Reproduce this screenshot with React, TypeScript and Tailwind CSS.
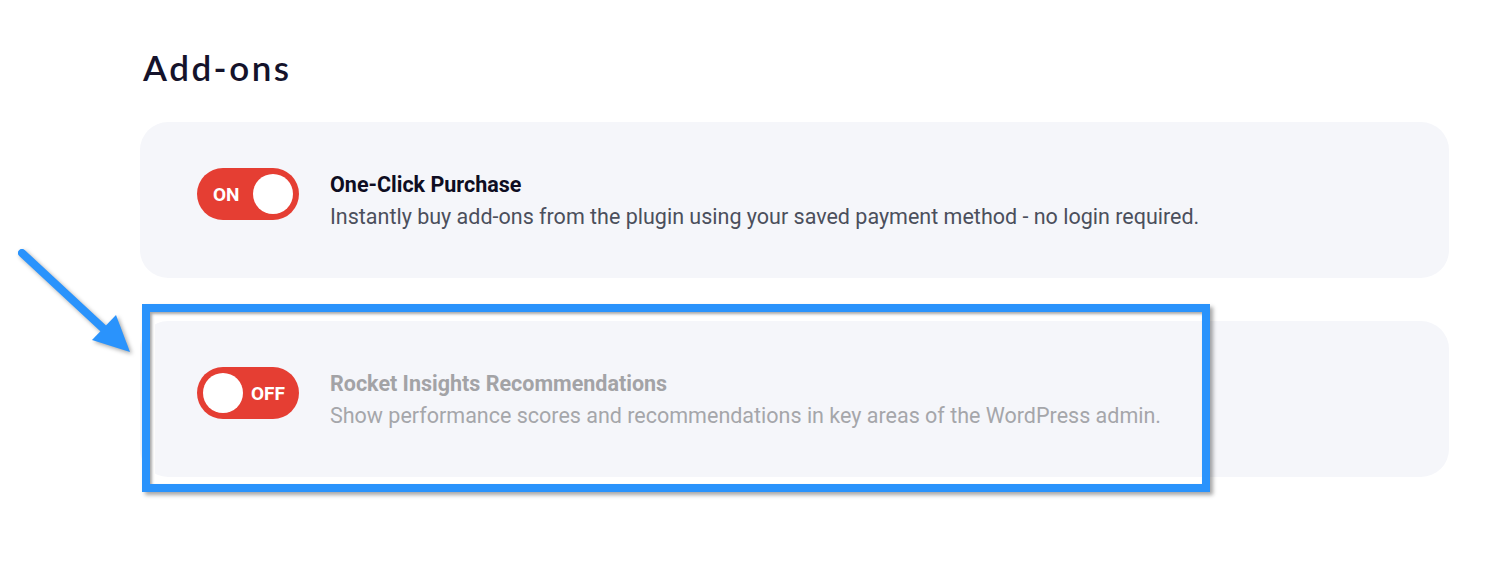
import React from 'react';

type AddonProps = {
  on: boolean;
  title: string;
  description: string;
  highlighted?: boolean;
};

const Toggle: React.FC<{ on: boolean }> = ({ on }) => (
  <div className="flex h-[52px] w-[102px] shrink-0 items-center rounded-full bg-[#e53e33] px-[6px]">
    {on ? (
      <>
        <span className="ml-[10px] w-[34px] text-[19px] font-bold leading-none text-white">ON</span>
        <span className="ml-auto h-[40px] w-[40px] rounded-full bg-white" />
      </>
    ) : (
      <>
        <span className="h-[40px] w-[40px] rounded-full bg-white" />
        <span className="ml-[8px] text-[19px] font-bold leading-none text-white">OFF</span>
      </>
    )}
  </div>
);

const AddonCard: React.FC<AddonProps> = ({ on, title, description, highlighted = false }) => (
  <div className="relative">
    <div className="flex h-[156px] items-start rounded-[28px] bg-[#f5f6fa] pl-[57px] pt-[46px]">
      <Toggle on={on} />
      <div className="ml-[31px] mt-[2px]">
        <h3
          className={
            on
              ? 'text-[21.5px] font-bold leading-[30px] text-[#0e0d22]'
              : 'text-[21.5px] font-bold leading-[30px] text-[#a3a3a6]'
          }
        >
          {title}
        </h3>
        <p
          className={
            on
              ? 'mt-[2px] text-[21.5px] leading-[30px] text-[#4b4f5c]'
              : 'mt-[2px] text-[21.5px] leading-[30px] text-[#a5a6aa]'
          }
        >
          {description}
        </p>
      </div>
    </div>
    {highlighted && (
      <div className="pointer-events-none absolute left-[2px] top-[-17px] h-[188px] w-[1068px] border-[8px] border-[#2a93fc] shadow-[inset_2px_2px_3px_rgba(0,0,0,0.35),inset_5px_0_0_#fff,3px_3px_4px_rgba(0,0,0,0.35)]" />
    )}
  </div>
);

export default function App() {
  return (
    <div className="relative h-[572px] w-[1504px] overflow-hidden bg-white font-['Roboto',sans-serif]">
      <div className="w-[1449px] pl-[140px] pt-[46px]">
        <h1 className="pl-[3px] font-['Lato',sans-serif] text-[35px] font-semibold leading-[42px] tracking-[2.5px] text-[#15132b]">
          Add-ons
        </h1>
        <div className="mt-[34px] flex flex-col gap-[43px]">
          <AddonCard
            on
            title="One-Click Purchase"
            description="Instantly buy add-ons from the plugin using your saved payment method - no login required."
          />
          <AddonCard
            on={false}
            highlighted
            title="Rocket Insights Recommendations"
            description="Show performance scores and recommendations in key areas of the WordPress admin."
          />
        </div>
      </div>

      {/* annotation arrow */}
      <svg
        className="absolute left-0 top-[240px] drop-shadow-[2px_2px_2px_rgba(0,0,0,0.35)]"
        width="140"
        height="120"
        viewBox="0 240 140 120"
      >
        <line x1="22" y1="253" x2="106" y2="331" stroke="#2a93fc" strokeWidth="8" strokeLinecap="round" />
        <polygon points="116,315 92,340 130,352" fill="#2a93fc" />
      </svg>
    </div>
  );
}
